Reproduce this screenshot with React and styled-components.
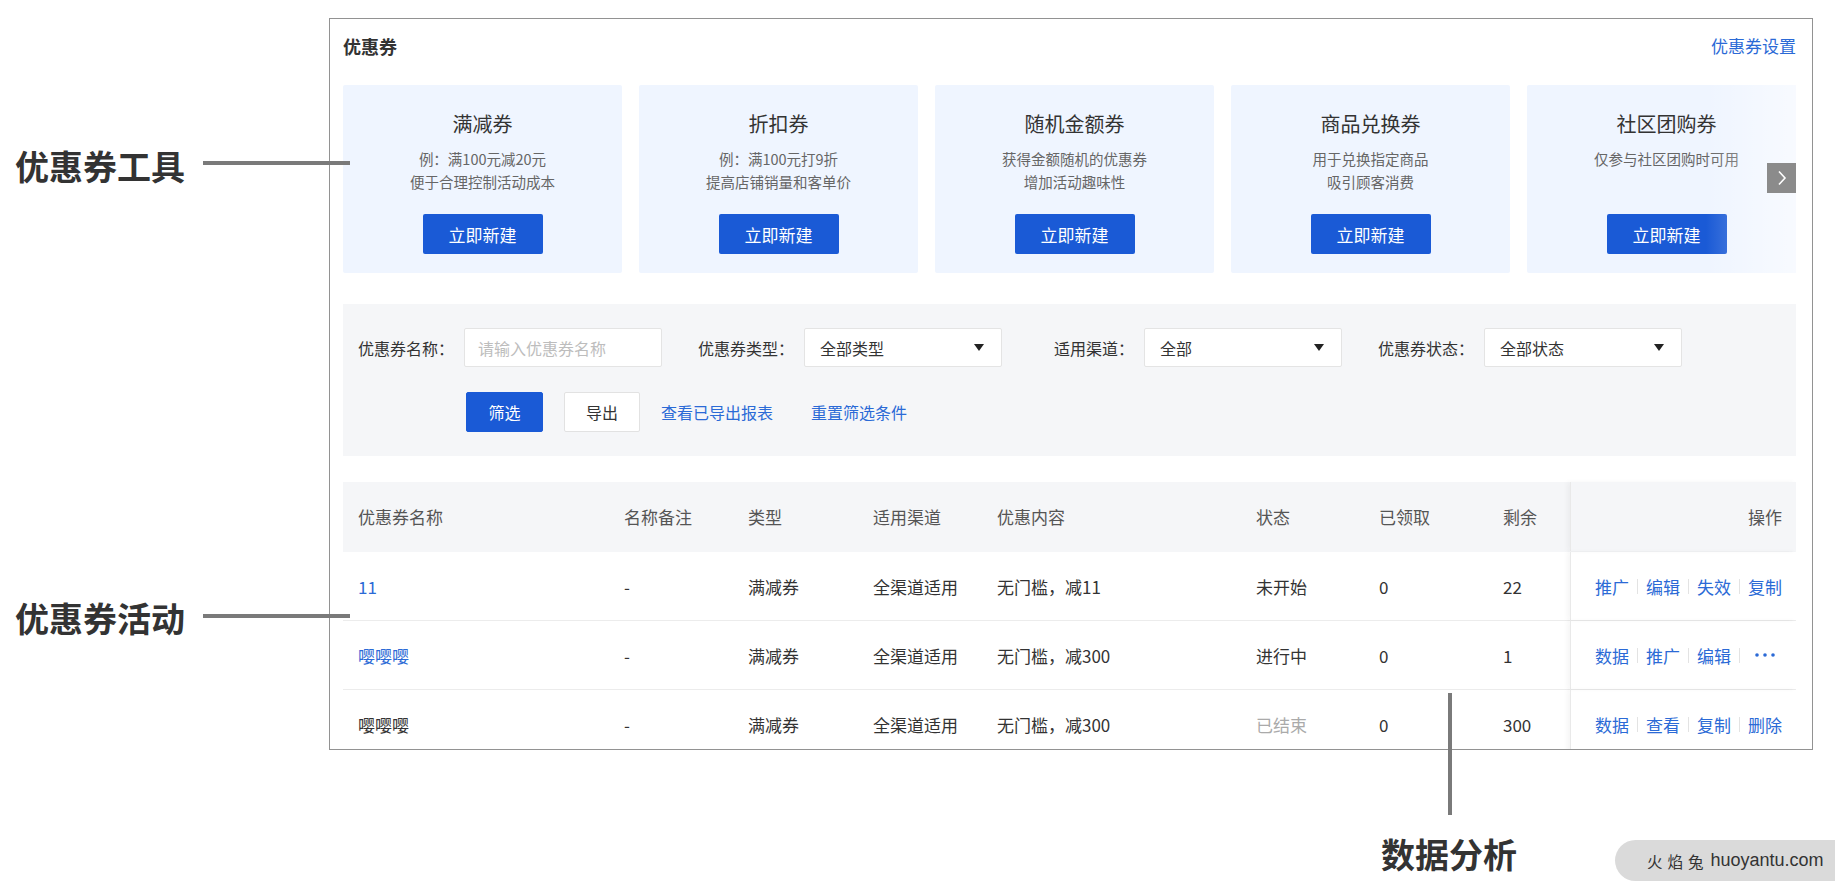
import React from "react";
import styled, { createGlobalStyle } from "styled-components";

const GlobalStyle = createGlobalStyle`
	html, body {
		margin: 0;
		padding: 0;
		background: #fff;
	}
	body {
		font-family: "Noto Sans CJK SC", "Noto Sans", sans-serif;
		color: #333;
	}
	* {
		box-sizing: border-box;
	}
`;

const BLUE = "#1a5ad6";
const LINK = "#2b6ad6";

const Page = styled.div`
	position: relative;
	width: 1835px;
	height: 896px;
	overflow: hidden;
	padding: 18px 0 0 329px;
`;

const Frame = styled.div`
	width: 1484px;
	height: 732px;
	border: 1px solid #929292;
	padding: 0 16px 0 13px;
	overflow: hidden;
	display: flex;
	flex-direction: column;
`;

const Header = styled.div`
	height: 53px;
	display: flex;
	align-items: center;
	justify-content: space-between;
	flex-shrink: 0;
`;

const Title = styled.div`
	font-size: 18px;
	font-weight: 700;
	color: #333;
`;

const HeaderLink = styled.a`
	font-size: 17px;
	color: ${LINK};
	text-decoration: none;
`;

const CardsRow = styled.div`
	position: relative;
	margin-top: 13px;
	display: flex;
	gap: 17px;
	height: 188px;
	overflow: hidden;
	flex-shrink: 0;
`;

const Card = styled.div`
	flex: 0 0 279px;
	background: #eff5ff;
	border-radius: 2px;
	display: flex;
	flex-direction: column;
	align-items: center;
	padding-top: 27px;
`;

const CardTitle = styled.div`
	font-size: 20px;
	line-height: 24px;
	color: #333;
`;

const CardDesc = styled.div`
	margin-top: 11px;
	height: 46px;
	font-size: 14.5px;
	line-height: 23px;
	color: #666;
	text-align: center;
`;

const CardButton = styled.button`
	margin-top: 21px;
	width: 120px;
	height: 40px;
	border: none;
	border-radius: 2px;
	background: ${BLUE};
	color: #fff;
	font-family: inherit;
	font-size: 17px;
	cursor: pointer;
`;

const Fade = styled.div`
	position: absolute;
	right: 0;
	top: 0;
	bottom: 0;
	width: 90px;
	background: linear-gradient(to right, rgba(255, 255, 255, 0), rgba(255, 255, 255, 0.55));
	pointer-events: none;
`;

const NextArrow = styled.div`
	position: absolute;
	right: 0;
	top: 78px;
	width: 29px;
	height: 30px;
	background: #8b8b8b;
	display: flex;
	align-items: center;
	justify-content: center;
`;

const FilterPanel = styled.div`
	margin-top: 31px;
	background: #f5f6f8;
	padding: 24px 15px;
	display: flex;
	flex-direction: column;
	gap: 25px;
	flex-shrink: 0;
`;

const FilterRow = styled.div`
	display: flex;
	align-items: center;
	gap: 36px;
`;

const FilterGroup = styled.div`
	display: flex;
	align-items: center;
`;

const FilterLabel = styled.div`
	width: 96px;
	margin-right: 10px;
	text-align: right;
	font-size: 16px;
	color: #333;
	white-space: nowrap;
`;

const TextInput = styled.input`
	width: 198px;
	height: 39px;
	border: 1px solid #e4e4e4;
	border-radius: 2px;
	background: #fff;
	padding: 0 13px;
	font-family: inherit;
	font-size: 16px;
	color: #333;
	outline: none;
	&::placeholder {
		color: #bdbdbd;
	}
`;

const Select = styled.div`
	width: 198px;
	height: 39px;
	border: 1px solid #e4e4e4;
	border-radius: 2px;
	background: #fff;
	padding: 0 17px 0 15px;
	display: flex;
	align-items: center;
	justify-content: space-between;
	font-size: 16px;
	color: #333;
`;

const ActionRow = styled.div`
	display: flex;
	align-items: center;
	padding-left: 108px;
`;

const Button = styled.button`
	width: ${(p) => (p.$primary ? "77px" : "76px")};
	height: 40px;
	margin-right: 21px;
	border: 1px solid ${(p) => (p.$primary ? BLUE : "#e2e2e2")};
	border-radius: 2px;
	background: ${(p) => (p.$primary ? BLUE : "#fff")};
	color: ${(p) => (p.$primary ? "#fff" : "#333")};
	font-family: inherit;
	font-size: 16px;
	cursor: pointer;
`;

const TextLink = styled.a`
	font-size: 16px;
	color: ${LINK};
	text-decoration: none;
	margin-right: 38px;
`;

const Table = styled.div`
	margin-top: 26px;
	flex-shrink: 0;
`;

const Row = styled.div`
	display: grid;
	grid-template-columns: 266px 124px 125px 124px 259px 123px 124px 82px 1fr;
	height: ${(p) => (p.$head ? "70px" : "69px")};
	background: ${(p) => (p.$head ? "#f5f6f8" : "#fff")};
	border-bottom: 1px solid ${(p) => (p.$head ? "#f5f6f8" : "#ececec")};
	font-size: 17px;
	color: ${(p) => (p.$head ? "#555" : "#333")};
`;

const Cell = styled.div`
	display: flex;
	align-items: center;
	padding-left: 15px;
	white-space: nowrap;
	color: ${(p) => p.$color || "inherit"};
`;

const OpCell = styled.div`
	display: flex;
	align-items: center;
	justify-content: flex-end;
	padding-right: 14px;
	border-left: 1px solid #e9e9e9;
	box-shadow: -3px 0 5px rgba(0, 0, 0, 0.04);
`;

const OpLink = styled.a`
	display: inline-flex;
	justify-content: center;
	align-items: center;
	width: 34px;
	color: ${LINK};
	text-decoration: none;
	font-size: 17px;
`;

const OpSep = styled.span`
	width: 1px;
	height: 15px;
	margin: 0 8px;
	background: #e3e3e3;
`;

const CalloutText = styled.div`
	position: absolute;
	font-size: 34px;
	line-height: 40px;
	font-weight: 700;
	color: #333;
	white-space: nowrap;
`;

const CalloutLine = styled.div`
	position: absolute;
	background: #7a7a7a;
`;

const Watermark = styled.div`
	position: absolute;
	left: 1615px;
	top: 840px;
	width: 220px;
	height: 41px;
	border-radius: 21px 0 0 21px;
	background: #dadada;
	display: flex;
	align-items: center;
	padding-left: 32px;
	font-family: "Liberation Sans", "Noto Sans CJK SC", sans-serif;
	font-size: 18px;
	color: #333;
	white-space: nowrap;
`;

const Cjk = styled.span`
	font-family: "Noto Sans CJK SC", sans-serif;
	font-size: 15.5px;
	letter-spacing: 5px;
	margin-right: 2px;
`;

const cards = [
	{ title: "满减券", desc: ["例：满100元减20元", "便于合理控制活动成本"] },
	{ title: "折扣券", desc: ["例：满100元打9折", "提高店铺销量和客单价"] },
	{ title: "随机金额券", desc: ["获得金额随机的优惠券", "增加活动趣味性"] },
	{ title: "商品兑换券", desc: ["用于兑换指定商品", "吸引顾客消费"] },
	{ title: "社区团购券", desc: ["仅参与社区团购时可用"] },
];

const columns = ["优惠券名称", "名称备注", "类型", "适用渠道", "优惠内容", "状态", "已领取", "剩余"];

const rows = [
	{ name: "11", link: true, type: "满减券", channel: "全渠道适用", content: "无门槛，减11", status: "未开始", got: "0", left: "22", ops: ["推广", "编辑", "失效", "复制"] },
	{ name: "嘤嘤嘤", link: true, type: "满减券", channel: "全渠道适用", content: "无门槛，减300", status: "进行中", got: "0", left: "1", ops: ["数据", "推广", "编辑", "more"] },
	{ name: "嘤嘤嘤", link: false, type: "满减券", channel: "全渠道适用", content: "无门槛，减300", status: "已结束", muted: true, got: "0", left: "300", ops: ["数据", "查看", "复制", "删除"] },
];

const Caret = () => (
	<svg width="10" height="7" viewBox="0 0 10 7">
		<path d="M0 0 L10 0 L5 7 Z" fill="#222" />
	</svg>
);

const MoreDots = () => (
	<svg width="20" height="4" viewBox="0 0 20 4">
		<circle cx="2" cy="2" r="1.8" fill={LINK} />
		<circle cx="10" cy="2" r="1.8" fill={LINK} />
		<circle cx="18" cy="2" r="1.8" fill={LINK} />
	</svg>
);

const SelectBox = ({ value }) => (
	<Select>
		<span>{value}</span>
		<Caret />
	</Select>
);

export default function App() {
	return (
		<>
			<GlobalStyle />
			<Page>
				<Frame>
					<Header>
						<Title>优惠券</Title>
						<HeaderLink>优惠券设置</HeaderLink>
					</Header>

					<CardsRow>
						{cards.map((c) => (
							<Card key={c.title}>
								<CardTitle>{c.title}</CardTitle>
								<CardDesc>
									{c.desc.map((d) => (
										<div key={d}>{d}</div>
									))}
								</CardDesc>
								<CardButton>立即新建</CardButton>
							</Card>
						))}
						<Fade />
						<NextArrow>
							<svg width="10" height="16" viewBox="0 0 10 16">
								<path d="M2 1.5 L8 8 L2 14.5" stroke="#fff" strokeWidth="1.6" fill="none" />
							</svg>
						</NextArrow>
					</CardsRow>

					<FilterPanel>
						<FilterRow>
							<FilterGroup>
								<FilterLabel>优惠券名称：</FilterLabel>
								<TextInput placeholder="请输入优惠券名称" />
							</FilterGroup>
							<FilterGroup>
								<FilterLabel>优惠券类型：</FilterLabel>
								<SelectBox value="全部类型" />
							</FilterGroup>
							<FilterGroup>
								<FilterLabel>适用渠道：</FilterLabel>
								<SelectBox value="全部" />
							</FilterGroup>
							<FilterGroup>
								<FilterLabel>优惠券状态：</FilterLabel>
								<SelectBox value="全部状态" />
							</FilterGroup>
						</FilterRow>
						<ActionRow>
							<Button $primary>筛选</Button>
							<Button>导出</Button>
							<TextLink>查看已导出报表</TextLink>
							<TextLink>重置筛选条件</TextLink>
						</ActionRow>
					</FilterPanel>

					<Table>
						<Row $head>
							{columns.map((h) => (
								<Cell key={h}>{h}</Cell>
							))}
							<OpCell>操作</OpCell>
						</Row>
						{rows.map((r, i) => (
							<Row key={i}>
								<Cell $color={r.link ? LINK : undefined}>{r.name}</Cell>
								<Cell>-</Cell>
								<Cell>{r.type}</Cell>
								<Cell>{r.channel}</Cell>
								<Cell>{r.content}</Cell>
								<Cell $color={r.muted ? "#aaa" : undefined}>{r.status}</Cell>
								<Cell>{r.got}</Cell>
								<Cell>{r.left}</Cell>
								<OpCell>
									{r.ops.map((op, j) => (
										<React.Fragment key={op}>
											{j > 0 && <OpSep />}
											<OpLink>{op === "more" ? <MoreDots /> : op}</OpLink>
										</React.Fragment>
									))}
								</OpCell>
							</Row>
						))}
					</Table>
				</Frame>

				<CalloutText style={{ left: 15, top: 146 }}>优惠券工具</CalloutText>
				<CalloutLine style={{ left: 203, top: 161, width: 147, height: 4 }} />
				<CalloutText style={{ left: 15, top: 598 }}>优惠券活动</CalloutText>
				<CalloutLine style={{ left: 203, top: 614, width: 147, height: 4 }} />
				<CalloutLine style={{ left: 1448, top: 693, width: 4, height: 122 }} />
				<CalloutText style={{ left: 1381, top: 834 }}>数据分析</CalloutText>

				<Watermark>
					<Cjk>火焰兔</Cjk>huoyantu.com
				</Watermark>
			</Page>
		</>
	);
}
